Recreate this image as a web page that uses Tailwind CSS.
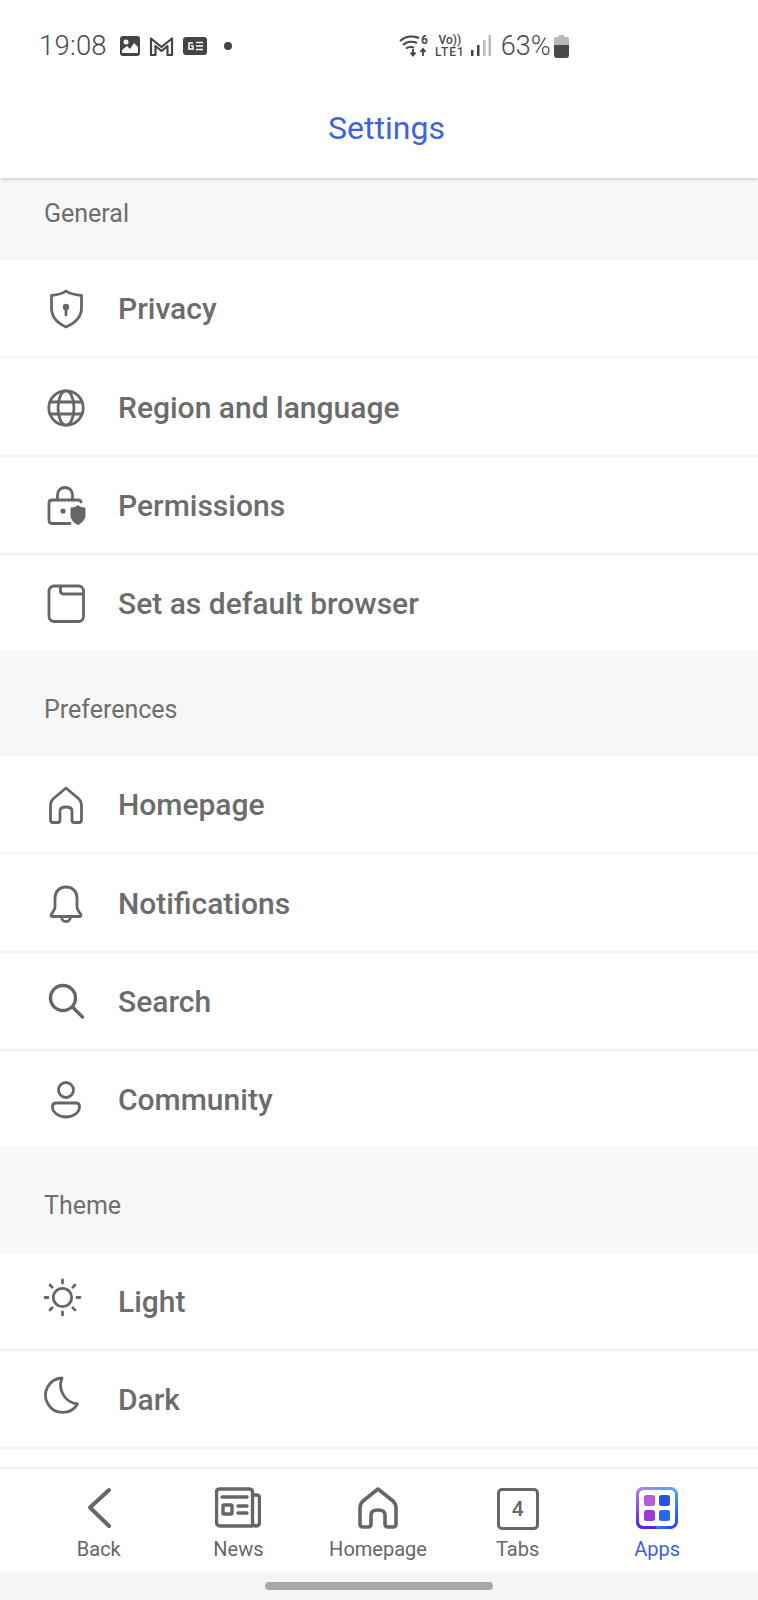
<!DOCTYPE html>
<html lang="en">
<head>
    <meta charset="UTF-8">
    <meta name="viewport" content="width=device-width, initial-scale=1.0">
    <title>Settings</title>
    <script src="https://cdn.jsdelivr.net/npm/@tailwindcss/browser@4"></script>
</head>
<body class="bg-white font-['Roboto',sans-serif] text-[#666666]">
<div class="flex flex-col h-[1600px] w-[758px] overflow-hidden">

    <!-- status bar -->
    <div class="h-[90px] shrink-0 bg-white relative flex items-start pt-[31px] text-[#4a4a4a]">
        <div class="flex items-center h-[30px] pl-[39px] w-[392px]">
            <span class="text-[27.5px] leading-[30px] font-light tracking-[0.2px] w-[80px]">19:08</span>
            <svg class="w-[22px] h-[22px]" viewBox="0 0 22 22"><rect x="1" y="1" width="20" height="20" rx="3" fill="#444"/><circle cx="7" cy="7" r="2.5" fill="#fff"/><path d="M3 18 L3 15 L8 11 L11 14 L15 8 L19 12 L19 18 Z" fill="#fff"/></svg>
            <svg class="w-[25px] h-[21px] ml-[8px]" viewBox="0 0 25 21"><path d="M2 19 V2.500 L12.500 11 L23 2.500 V19 H18.500 V10 L12.500 15 L6.500 10 V19 Z" fill="none" stroke="#444" stroke-width="2.200" stroke-linejoin="round"/></svg>
            <svg class="w-[24px] h-[18px] ml-[9px]" viewBox="0 0 24 18"><rect width="24" height="18" rx="3" fill="#444"/><path d="M10 6 H6 V12 H10 V9 H8" fill="none" stroke="#fff" stroke-width="1.600"/><path d="M13 5.500 H20 M13 9 H20 M13 12.500 H20" stroke="#fff" stroke-width="1.500"/></svg>
            <span class="w-[8px] h-[8px] rounded-full bg-[#444] ml-[17px]"></span>
        </div>
        <div class="flex items-center h-[30px] ml-[7px]">
            <svg class="w-[30px] h-[22px]" viewBox="0 0 30 22"><path d="M1 6 C7 0.500 15 0.500 20 3 M4 10 C8 6 14 6 18 8 M7 13.500 C9.500 11.500 12 11.500 15 12.500" fill="none" stroke="#444" stroke-width="2"/><path d="M14 14 V20 M11.500 17.500 L14 20.500 L16.500 17.500 M24 21 V14.500 M21.500 17 L24 14 L26.500 17" fill="none" stroke="#444" stroke-width="1.800"/></svg>
            <span class="-ml-[8px] -mt-[13px] text-[12px] leading-[12px] font-bold">6</span>
            <div class="flex flex-col items-center ml-[7px] text-[12px] leading-[12px] font-medium">
                <span>Vo))</span>
                <span class="tracking-[1px]">LTE1</span>
            </div>
            <svg class="w-[20px] h-[22px] ml-[6px]" viewBox="0 0 20 22"><rect x="0" y="15" width="2.500" height="6" fill="#444"/><rect x="6" y="10" width="2.500" height="11" fill="#444"/><rect x="12" y="5" width="2.500" height="16" fill="#bbb"/><rect x="17.500" y="0" width="2.500" height="21" fill="#bbb"/></svg>
            <span class="text-[27px] leading-[30px] font-light ml-[10px]">63%</span>
            <svg class="w-[15px] h-[23px] ml-[3px]" viewBox="0 0 16 23" preserveAspectRatio="none"><path d="M5 0 H11 V2 H14 Q16 2 16 4 V10 H0 V4 Q0 2 2 2 H5 Z" fill="#b9b9b9"/><path d="M0 10 H16 V20 Q16 23 13 23 H3 Q0 23 0 20 Z" fill="#4a4a4a"/></svg>
        </div>
    </div>

    <!-- title bar -->
    <div class="h-[88px] shrink-0 bg-white relative z-10 shadow-[0_3px_3px_-1px_rgba(0,0,0,0.15)] flex justify-center pt-[18px] pl-[15px]">
        <span class="text-[32px] leading-[40px] text-[#3e63dd]">Settings</span>
    </div>

    <!-- list -->
    <div class="flex-1 min-h-0 overflow-hidden">
        <div class="h-[82px] bg-[#f7f7f7] pl-[44px] pt-[20px] text-[25px] leading-[32px] text-[#6e6e6e]">General</div>

        <div class="h-[98px] flex items-center pt-[2px] border-b-2 border-[#f5f5f5]">
            <svg class="w-[40px] h-[40px] ml-[46px] overflow-visible" viewBox="0 0 40 40" fill="none" stroke="#666" stroke-width="2.800" stroke-linejoin="round" stroke-linecap="round"><path d="M20 2 C24 5 30 6 35.500 6.500 V19 C35.500 28 29 34 20 38 C11 34 5.500 28 5.500 19 V6.500 C10 6 16 5 20 2 Z"/><circle cx="20" cy="18" r="3.200" fill="#666" stroke="none"/><path d="M20 19 V26"/></svg>
            <span class="ml-[32px] text-[30px] leading-[40px] font-medium text-[#6c6c6c]">Privacy</span>
        </div>
        <div class="h-[99px] flex items-center pt-[2px] border-b-2 border-[#f5f5f5]">
            <svg class="w-[40px] h-[40px] ml-[46px] overflow-visible" viewBox="0 0 40 40" fill="none" stroke="#666" stroke-width="2.800"><circle cx="20" cy="20" r="17.200"/><ellipse cx="20" cy="20" rx="8" ry="17.200"/><path d="M3.500 14 H36.500 M3.500 26 H36.500"/></svg>
            <span class="ml-[32px] text-[30px] leading-[40px] font-medium text-[#6c6c6c]">Region and language</span>
        </div>
        <div class="h-[98px] flex items-center pt-[2px] border-b-2 border-[#f5f5f5]">
            <svg class="w-[40px] h-[40px] ml-[46px] overflow-visible" viewBox="0 0 40 40" fill="none" stroke="#666" stroke-width="2.800" stroke-linecap="round"><path d="M24 37.500 H6 Q3 37.500 3 34.500 V17 Q3 14 6 14 H32 Q34.500 14 35 16"/><path d="M11.500 14 V9 C11.500 -1 26.500 -1 26.500 9 V14"/><circle cx="17" cy="25" r="2.600" fill="#666" stroke="none"/><path d="M32 19 C34 21 37 21.500 39.500 21.500 V29 C39.500 33.500 36 37 32 39 C28 37 24.500 33.500 24.500 29 V21.500 C27 21.500 30 21 32 19 Z" fill="#666" stroke="none"/></svg>
            <span class="ml-[32px] text-[30px] leading-[40px] font-medium text-[#6c6c6c]">Permissions</span>
        </div>
        <div class="h-[96px] flex items-center pt-[2px]">
            <svg class="w-[40px] h-[40px] ml-[46px] overflow-visible" viewBox="0 0 40 40" fill="none" stroke="#666" stroke-width="2.800" stroke-linejoin="round"><rect x="3" y="2" width="34.500" height="35.500" rx="5"/><path d="M14.500 2 V7 Q14.500 10 17.500 10 H37.500"/></svg>
            <span class="ml-[32px] text-[30px] leading-[40px] font-medium text-[#6c6c6c]">Set as default browser</span>
        </div>

        <div class="h-[105px] bg-[#f7f7f7] pl-[44px] pt-[43px] text-[25px] leading-[32px] text-[#6e6e6e]">Preferences</div>

        <div class="h-[98px] flex items-center pt-[2px] border-b-2 border-[#f5f5f5]">
            <svg class="w-[40px] h-[40px] ml-[46px] overflow-visible" viewBox="0 0 40 40" fill="none" stroke="#666" stroke-width="2.800" stroke-linejoin="round"><path d="M20 3 L7 14 Q4.500 16.500 4.500 20 V35 Q4.500 37.500 7 37.500 H12 Q14 37.500 14 35 V26 Q14 22 20 22 Q26 22 26 26 V35 Q26 37.500 28 37.500 H33 Q35.500 37.500 35.500 35 V20 Q35.500 16.500 33 14 Z"/></svg>
            <span class="ml-[32px] text-[30px] leading-[40px] font-medium text-[#6c6c6c]">Homepage</span>
        </div>
        <div class="h-[99px] flex items-center pt-[2px] border-b-2 border-[#f5f5f5]">
            <svg class="w-[40px] h-[40px] ml-[46px] overflow-visible" viewBox="0 0 40 40" fill="none" stroke="#666" stroke-width="2.800" stroke-linejoin="round"><path d="M5 31 C5 29.500 9 27 9 23 V14 C9 7 14 3 20 3 C26 3 31 7 31 14 V23 C31 27 35 29.500 35 31 Q35 32.500 33.500 32.500 H6.500 Q5 32.500 5 31 Z"/><path d="M15.500 33 C15.500 39 24.500 39 24.500 33"/></svg>
            <span class="ml-[32px] text-[30px] leading-[40px] font-medium text-[#6c6c6c]">Notifications</span>
        </div>
        <div class="h-[98px] flex items-center pt-[2px] border-b-2 border-[#f5f5f5]">
            <svg class="w-[40px] h-[40px] ml-[46px] overflow-visible" viewBox="0 0 40 40" fill="none" stroke="#666" stroke-width="3.400" stroke-linecap="round"><circle cx="17" cy="16" r="12.500"/><path d="M26.500 25 L36.500 35"/></svg>
            <span class="ml-[32px] text-[30px] leading-[40px] font-medium text-[#6c6c6c]">Search</span>
        </div>
        <div class="h-[96px] flex items-center pt-[2px]">
            <svg class="w-[40px] h-[40px] ml-[46px] overflow-visible" viewBox="0 0 40 40" fill="none" stroke="#666" stroke-width="2.800"><circle cx="20" cy="10" r="7.500"/><path d="M10 23 H30 Q33.500 23 33.500 26.500 C33.500 33 27 37 20 37 C13 37 6.500 33 6.500 26.500 Q6.500 23 10 23 Z"/></svg>
            <span class="ml-[32px] text-[30px] leading-[40px] font-medium text-[#6c6c6c]">Community</span>
        </div>

        <div class="h-[106px] bg-[#f7f7f7] pl-[44px] pt-[43px] text-[25px] leading-[32px] text-[#6e6e6e]">Theme</div>

        <div class="h-[98px] flex items-center pt-[2px] border-b-2 border-[#f5f5f5]">
            <svg class="w-[40px] h-[40px] ml-[46px] overflow-visible" viewBox="0 0 40 40" fill="none" stroke="#666" stroke-width="2.800" stroke-linecap="round"><circle cx="16.500" cy="15.500" r="9.200"/><path d="M16.500 -2 V1 M16.500 30 V33 M-1 15.500 H2 M31 15.500 H34 M4 3 L6.200 5.200 M26.800 25.800 L29 28 M29 3 L26.800 5.200 M6.200 25.800 L4 28"/></svg>
            <span class="ml-[32px] text-[30px] leading-[40px] font-medium text-[#6c6c6c]">Light</span>
        </div>
        <div class="h-[98px] flex items-center pt-[2px] border-b-2 border-[#f5f5f5]">
            <svg class="w-[40px] h-[40px] ml-[46px] overflow-visible" viewBox="0 0 40 40" fill="none" stroke="#666" stroke-width="2.800" stroke-linejoin="round"><path d="M16 -2 A17.200 17.200 0 1 0 31.500 24 A19 19 0 0 1 16 -2 Z"/></svg>
            <span class="ml-[32px] text-[30px] leading-[40px] font-medium text-[#6c6c6c]">Dark</span>
        </div>
    </div>

    <!-- bottom tabs -->
    <div class="h-[106px] shrink-0 bg-white border-t-2 border-[#f1f1f1] grid grid-cols-5 pl-[29px] pr-[31px] text-[20px] leading-[24px]">
        <div class="flex flex-col items-center">
            <svg class="w-[44px] h-[44px] mt-[17px]" viewBox="0 0 44 44" fill="none" stroke="#666" stroke-width="4" stroke-linecap="round" stroke-linejoin="round"><path d="M32 4 L13 21.500 L32 40"/></svg>
            <span class="mt-[7px]">Back</span>
        </div>
        <div class="flex flex-col items-center">
            <svg class="w-[46px] h-[44px] mt-[17px]" viewBox="0 0 46 44" fill="none" stroke="#666" stroke-width="3.400" stroke-linejoin="round"><path d="M38 40 H6 Q1.500 40 1.500 36 V6 Q1.500 3 5 3 H34 Q37.500 3 37.500 6 V36 Q37.500 40 41 40 Q44.500 40 44.500 36 V12 Q44.500 9 41 9 H38"/><path d="M7 11 H32 M23 20 H32 M23 27 H32" stroke-linecap="round"/><rect x="8" y="19" width="9" height="9" rx="1"/></svg>
            <span class="mt-[7px]">News</span>
        </div>
        <div class="flex flex-col items-center">
            <svg class="w-[44px] h-[44px] mt-[17px]" viewBox="0 0 44 44" fill="none" stroke="#666" stroke-width="3.600" stroke-linejoin="round"><path d="M22 3 L7 15 Q4 18 4 22 V38 Q4 41 7 41 H12 Q15 41 15 38 V29 Q15 24 22 24 Q29 24 29 29 V38 Q29 41 32 41 H37 Q40 41 40 38 V22 Q40 18 37 15 Z"/></svg>
            <span class="mt-[7px]">Homepage</span>
        </div>
        <div class="flex flex-col items-center">
            <div class="w-[42px] h-[42px] mt-[19px] rounded-[5px] border-[3.5px] border-[#666] flex items-center justify-center text-[21px] leading-none font-medium">4</div>
            <span class="mt-[7px]">Tabs</span>
        </div>
        <div class="flex flex-col items-center text-[#3e63dd]">
            <svg class="w-[42px] h-[42px] mt-[18px] mb-[1px]" viewBox="0 0 42 42">
                <defs>
                    <linearGradient id="ring" x1="0" y1="0" x2="1" y2="1"><stop offset="0" stop-color="#a583f0"/><stop offset="0.5" stop-color="#4aa8f5"/><stop offset="1" stop-color="#2a3cf0"/></linearGradient>
                    <linearGradient id="ring2" x1="0" y1="0" x2="0" y2="1"><stop offset="0" stop-color="#b77de8"/><stop offset="1" stop-color="#5a1fe8"/></linearGradient>
                </defs>
                <rect x="1.500" y="1.500" width="39" height="39" rx="6" fill="none" stroke="url(#ring)" stroke-width="3"/>
                <path d="M8 1.500 H7.500 Q1.500 1.500 1.500 7.500 V34.500 Q1.500 40.500 7.500 40.500 H20" fill="none" stroke="url(#ring2)" stroke-width="3"/>
                <rect x="8" y="8" width="11" height="11" rx="2.500" fill="#b95bd6"/>
                <rect x="23" y="8" width="11" height="11" rx="2.500" fill="#2b4fe8"/>
                <rect x="8" y="23" width="11" height="11" rx="2.500" fill="#9a38e0"/>
                <rect x="23" y="23" width="11" height="11" rx="2.500" fill="#2a68e8"/>
            </svg>
            <span class="mt-[7px]">Apps</span>
        </div>
    </div>

    <!-- gesture bar -->
    <div class="h-[27px] shrink-0 bg-[#f5f5f5] flex justify-center pt-[9px]">
        <div class="w-[228px] h-[8px] rounded-full bg-[#a9a9a9]"></div>
    </div>
</div>
</body>
</html>
